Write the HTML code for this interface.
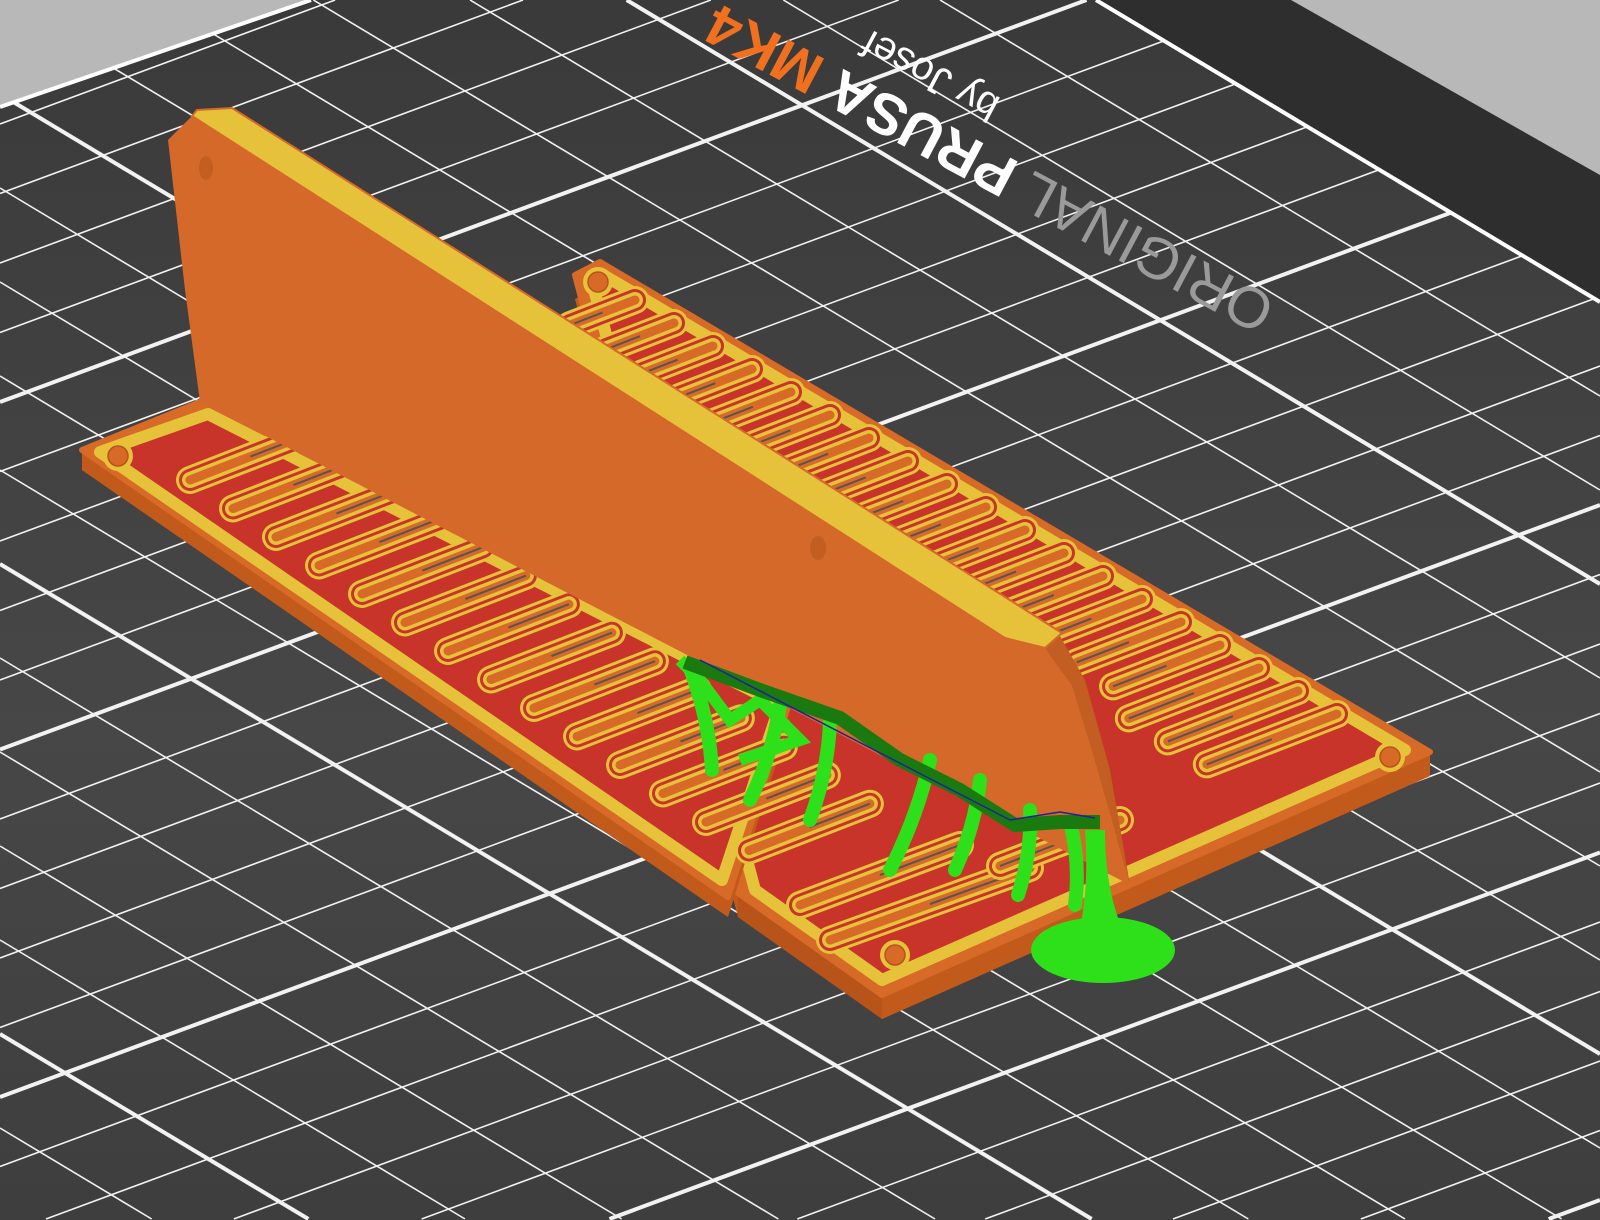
<!DOCTYPE html>
<html><head><meta charset="utf-8"><style>
html,body{margin:0;padding:0;background:#b8b8b8;overflow:hidden;width:1600px;height:1220px;}
#wrap{position:absolute;left:0;top:0;width:1600px;height:1220px;overflow:hidden;}
svg{display:block}
</style></head><body>
<div id="wrap">
<svg id="s" width="1600" height="1220" viewBox="0 0 1600 1220" xmlns="http://www.w3.org/2000/svg" overflow="hidden">
<defs>
<clipPath id="bed"><polygon points="0,107 311,0 1096,0 1600,302 1600,1220 0,1220"/></clipPath>
<linearGradient id="bg" x1="0" y1="0" x2="0" y2="1"><stop offset="0" stop-color="#3a3a3a"/><stop offset="0.6" stop-color="#474747"/><stop offset="1" stop-color="#3e3e3e"/></linearGradient>
</defs>
<rect width="1600" height="1220" fill="#b8b8b8"/>
<polygon points="1096,0 1291,0 1600,175 1600,302" fill="#2e2e2e"/>
<polygon points="0,107 311,0 1096,0 1600,302 1600,1220 0,1220" fill="url(#bg)"/>
<g id="grid" clip-path="url(#bed)" stroke="#f2f2f2"></g>
<line x1="0" y1="107" x2="311" y2="0" stroke="#fff" stroke-width="4"/>
<line x1="1096" y1="0" x2="1600" y2="302" stroke="#fff" stroke-width="4"/>
<g transform="translate(1278,300) rotate(208)" font-family="Liberation Sans, sans-serif">
<text x="0" y="0" font-size="58" fill="#9a9a9a">ORIGINAL <tspan fill="#ffffff" font-weight="bold">PRUSA</tspan> <tspan fill="#f07020" font-weight="bold">MK4</tspan></text>
<text x="338" y="48" font-size="40" fill="#ffffff">by Josef</text>
</g>
<g id="obj"></g>
</svg>
</div>
<script>
var NS="http://www.w3.org/2000/svg";
function el(p,t,a){var e=document.createElementNS(NS,t);for(var k in a)e.setAttribute(k,a[k]);p.appendChild(e);return e;}
var g=document.getElementById('grid');
function gl(m,c,w){
 var xa=(0-c)/m, xb=(1219-c)/m; var lo=Math.max(0,Math.min(xa,xb)), hi=Math.min(1600,Math.max(xa,xb));
 if(hi<=lo)return;
 el(g,'line',{x1:lo,y1:m*lo+c,x2:hi,y2:m*hi+c,'stroke-width':w});}
for(var k=0;k<40;k++){var c=-658+94*k;gl(0.6,c,(k%5==3)?4:1.6);}
for(var k=-8;k<30;k++){var c=402+69.5*k;gl(-0.37,c,(k%5==0)?4:1.6);}
var o=document.getElementById('obj');
function poly(pts,f,extra){var a={points:pts.map(function(p){return p.join(',')}).join(' '),fill:f};for(var k in extra)a[k]=extra[k];return el(o,'polygon',a);}
function off(pts,dy){return pts.map(function(p){return [p[0],p[1]+dy]});}
var P2=[[575,275],[600,262],[1430,752],[882,995],[738,893]];
poly(off(P2,24),'#c25a1c');
poly([[1430,752],[1430,776],[882,1019],[882,995]],'#c25a1c');
poly([[882,995],[882,1019],[738,917],[738,893]],'#b8541a');
poly(P2,'#d86a28',{stroke:'#d86a28','stroke-width':6,'stroke-linejoin':'round'});
poly([[592,282],[605,276],[1405,750],[882,980],[755,890]],'#c8342a',{stroke:'#e6c23a','stroke-width':12,'stroke-linejoin':'round'});
var P1=[[82,450],[205,400],[790,700],[728,897]];
poly(off(P1,20),'#c25a1c');
poly([[82,450],[82,470],[728,917],[728,897]],'#c25a1c');
poly(P1,'#d86a28',{stroke:'#d86a28','stroke-width':6,'stroke-linejoin':'round'});
poly([[100,452],[208,414],[780,705],[722,880]],'#c8342a',{stroke:'#e6c23a','stroke-width':12,'stroke-linejoin':'round'});
function slot(x1,y1,x2,y2){
 el(o,'line',{x1:x1,y1:y1,x2:x2,y2:y2,stroke:'#e6c23a','stroke-width':28,'stroke-linecap':'round'});
 el(o,'line',{x1:x1,y1:y1,x2:x2,y2:y2,stroke:'#c8342a','stroke-width':22,'stroke-linecap':'round'});
 el(o,'line',{x1:x1,y1:y1,x2:x2,y2:y2,stroke:'#e6c23a','stroke-width':16,'stroke-linecap':'round'});
 el(o,'line',{x1:x1,y1:y1,x2:x2,y2:y2,stroke:'#d86a28','stroke-width':9,'stroke-linecap':'round'});
 el(o,'line',{x1:(x1+x2)/2,y1:(y1+y2)/2,x2:x2,y2:y2,stroke:'#555','stroke-width':2});}
for(var t=0;t<14;t++){var bx=190+t*43,by=480+t*28.5;var L=130;slot(bx,by,bx+0.93*L,by-0.36*L);}
for(var t=0;t<19;t++){var ex=635+t*39,ey=300+t*23;var L=70+t*3;if(t>15)L=140;
 slot(ex,ey,ex-0.93*L,ey+0.36*L);}
slot(800,905,960,845);slot(830,940,1030,868);slot(1120,820,1000,866);
[[118,456],[598,282],[1390,757],[895,955]].forEach(function(h){
 el(o,'circle',{cx:h[0],cy:h[1],r:15,fill:'#e6c23a'});
 el(o,'circle',{cx:h[0],cy:h[1],r:10,fill:'#d86a28',stroke:'#b8541a','stroke-width':1.5});});
poly([[168,140],[192,116],[1005,638],[1045,648],[1072,685],[1095,760],[1130,885],[200,402],[185,290]],'#d4692a');
poly([[1045,648],[1060,636],[1085,680],[1110,770],[1130,885],[1095,760],[1072,685]],'#c25e22');
poly([[197,110],[232,108],[1062,633],[1045,648],[1005,638],[192,116]],'#e6c23a',{stroke:'#d4692a','stroke-width':2});
el(o,'ellipse',{cx:206,cy:168,rx:7,ry:12,fill:'#c25e22'});
el(o,'ellipse',{cx:818,cy:548,rx:8,ry:12,fill:'#c25e22'});
var gs='#2ee01a';
el(o,'ellipse',{cx:1103,cy:950,rx:72,ry:33,fill:gs});
[[690,668,712,770],[780,705,750,800],[830,722,810,820],[930,760,890,870],[980,780,955,870],[1030,810,1018,895],[1070,822,1075,905]].forEach(function(b){
 el(o,'path',{d:'M'+b[0]+','+b[1]+' Q'+((b[0]+b[2])/2+8)+','+((b[1]+b[3])/2)+' '+b[2]+','+b[3],stroke:gs,'stroke-width':14,fill:'none','stroke-linecap':'round'});});
el(o,'path',{d:'M680,660 L700,680 L730,720 L760,700 L800,740 L740,760',stroke:gs,'stroke-width':12,fill:'none'});
el(o,'path',{d:'M1085,830 Q1090,900 1075,945 L1130,945 Q1105,900 1105,830 Z',fill:gs});
el(o,'path',{d:'M685,662 L760,690 L840,718 L900,760 L960,790 L1015,825 L1060,822 L1100,822',stroke:'#1a7a10','stroke-width':14,fill:'none','stroke-linejoin':'round'});
el(o,'path',{d:'M700,660 L1010,820 L1060,812 L1095,818',stroke:'#2020a0','stroke-width':1.5,fill:'none'});
</script>
</body></html>
